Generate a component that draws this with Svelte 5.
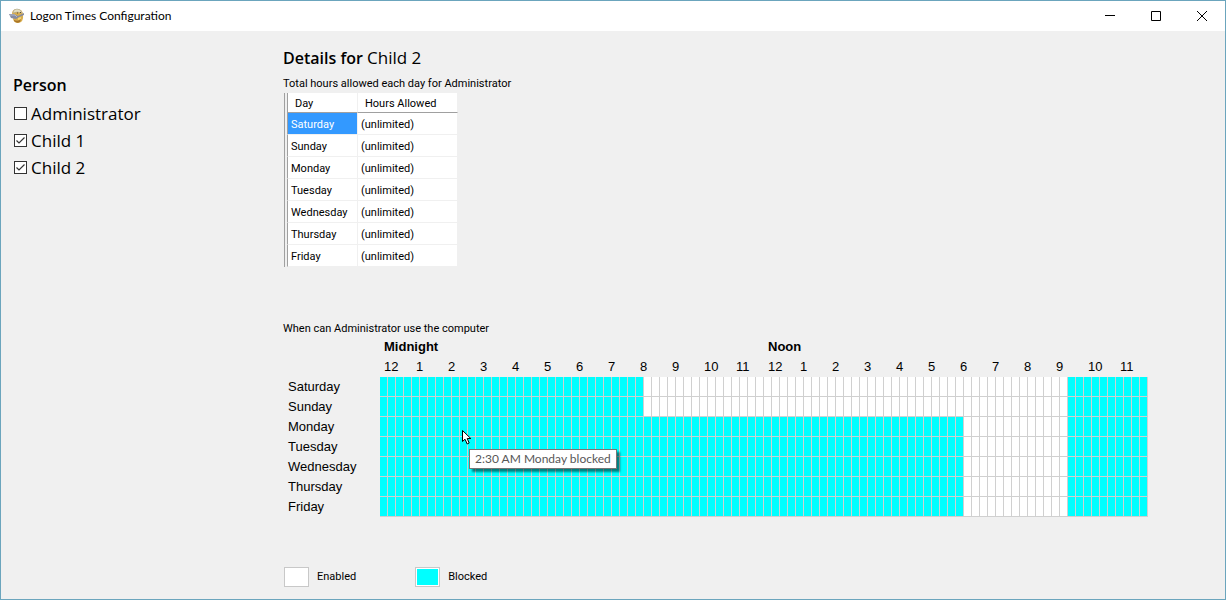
<script>
  const days = ['Saturday', 'Sunday', 'Monday', 'Tuesday', 'Wednesday', 'Thursday', 'Friday'];
  const hours = Array.from({ length: 24 }, (_, i) => i % 12 || 12);

  let people = $state([
    { name: 'Administrator', limited: false },
    { name: 'Child 1', limited: true },
    { name: 'Child 2', limited: true }
  ]);

  // Quarter-hour slots, true when logon is blocked
  let schedule = $state(
    days.map((_, d) => Array.from({ length: 96 }, (_, q) => q < (d < 2 ? 33 : 73) || q >= 86))
  );

  function slotName(d, q) {
    const h = Math.floor(q / 4);
    const minutes = String((q % 4) * 15).padStart(2, '0');
    return `${h % 12 || 12}:${minutes} ${h < 12 ? 'AM' : 'PM'} ${days[d]} ${schedule[d][q] ? 'blocked' : 'enabled'}`;
  }
</script>

<div class="window">
  <header>
    <svg class="logo" width="16" height="16" viewBox="0 0 16 16" aria-hidden="true">
      <path d="M3 6 Q3 1 8 1 Q14 1 14 7 Q15 14 9 15 Q5 15 4 11Z" fill="#d9ae4e" />
      <path d="M4 5 Q4 1 8 1 Q12 1 13 5 Q8 3 4 5Z" fill="#e6dfc0" stroke="#aaa490" stroke-width=".6" />
      <path d="M0 6 L5 6 L9 8 L15 5 L15 7 L10 9 L7 11 L2 10Z" fill="#858ba0" />
      <path d="M1 7 L6 7 L8 9" stroke="#b5bacb" fill="none" />
      <path d="M5 12 Q9 14 12 11 L11 14 Q8 16 5 13Z" fill="#a97528" />
      <path d="M9 10 L12 9 L12 11 L9 12Z" fill="#f1d477" />
      <path d="M8 5 L9 5 M11 4 L12 5" stroke="#5d4d35" />
    </svg>
    <span class="title">Logon Times Configuration</span>
    <button class="caption" aria-label="Minimize">
      <svg width="10" height="10" viewBox="0 0 10 10"><path d="M0 4.5H10" /></svg>
    </button>
    <button class="caption" aria-label="Maximize">
      <svg width="10" height="10" viewBox="0 0 10 10"><path d="M.5 .5H9.5V9.5H.5Z" /></svg>
    </button>
    <button class="caption" aria-label="Close">
      <svg width="10" height="10" viewBox="0 0 10 10"><path d="M0 0L10 10M10 0L0 10" /></svg>
    </button>
  </header>

  <main>
    <aside>
      <h2>Person</h2>
      {#each people as person}
        <label class="person">
          <input type="checkbox" bind:checked={person.limited} />
          <span>{person.name}</span>
        </label>
      {/each}
    </aside>

    <section>
      <h1>Details for <span>Child 2</span></h1>
      <p class="note">Total hours allowed each day for Administrator</p>
      <table class="allowance">
        <thead>
          <tr><th scope="col">Day</th><th scope="col">Hours Allowed</th></tr>
        </thead>
        <tbody>
          {#each days as day, d}
            <tr><td class:selected={d === 0}>{day}</td><td>(unlimited)</td></tr>
          {/each}
        </tbody>
      </table>

      <p class="note when">When can Administrator use the computer</p>
      <table class="schedule">
        <thead>
          <tr class="halves">
            <td></td>
            <th colspan="48" scope="colgroup">Midnight</th>
            <th colspan="48" scope="colgroup">Noon</th>
          </tr>
          <tr class="hours">
            <td></td>
            {#each hours as hour}<th colspan="4" scope="colgroup">{hour}</th>{/each}
          </tr>
        </thead>
        <tbody>
          {#each days as day, d}
            <tr>
              <th scope="row">{day}</th>
              {#each schedule[d] as blocked, q}
                <td class:hovered={d === 2 && q === 10}>
                  <button
                    class="slot"
                    class:blocked
                    aria-label={slotName(d, q)}
                    onclick={() => (schedule[d][q] = !schedule[d][q])}
                  ></button>
                  {#if d === 2 && q === 10}
                    <svg class="pointer" width="12" height="17" viewBox="0 0 12 17" aria-hidden="true">
                      <path d="M.5 .5V11.5L3 9.2L5.2 14L7.2 13L5.2 8.5H8.8Z" fill="#fff" stroke="#000" />
                    </svg>
                    <span class="tip" role="tooltip">{slotName(d, q)}</span>
                  {/if}
                </td>
              {/each}
            </tr>
          {/each}
        </tbody>
      </table>

      <div class="legend">
        <span class="key"><i></i>Enabled</span>
        <span class="key"><i class="on"></i>Blocked</span>
      </div>
    </section>
  </main>
</div>

<style>
  :global(body) { margin: 0; background: #f0f0f0; }
  .window {
    box-sizing: border-box;
    min-height: 100vh;
    border: 1px solid #6ba5bd;
    background: #f0f0f0;
    color: #000;
    font: 11px/16px Roboto, "Liberation Sans", sans-serif;
    display: flex;
    flex-direction: column;
  }
  header { display: flex; align-items: center; height: 30px; padding-left: 8px; background: #fff; }
  .title { flex: 1; margin-left: 5px; font: 12px/16px Lato, sans-serif; }
  .caption { width: 46px; height: 30px; padding: 0; border: 0; background: none; display: grid; place-items: center; }
  .caption svg { fill: none; stroke: #000; stroke-width: 1; }
  main { display: flex; flex: 1; }
  aside { flex: none; width: 270px; padding: 42px 0 0 12px; box-sizing: border-box; }
  h1, h2 { margin: 0; font: 600 16px/24px "Open Sans", sans-serif; }
  h1 span, .person { font: 17px/27px "Open Sans", sans-serif; }
  h1 span { line-height: 24px; }
  h2 { margin-bottom: 3px; }
  .person { display: flex; align-items: center; gap: 4px; padding-left: 1px; }
  input {
    appearance: none; width: 13px; height: 13px; margin: 0; border: 1px solid #333; background: #fff;
  }
  input:checked {
    background: #fff url("data:image/svg+xml,%3Csvg xmlns='http://www.w3.org/2000/svg' viewBox='0 0 11 11'%3E%3Cpath d='M1.5 5.5L4 8L9.5 2.5' fill='none' stroke='%23333' stroke-width='1.2'/%3E%3C/svg%3E");
  }
  section { padding: 15px 0 12px 12px; }
  .note { margin: 6px 0 1px; }
  table { border-collapse: separate; border-spacing: 0; }
  th { font-weight: normal; text-align: left; }
  th, td { padding: 0; }
  .allowance { margin-left: 1px; border-left: 1px solid #a0a0a0; padding-left: 2px; }
  .allowance th, .allowance td { box-sizing: border-box; height: 22px; background: #fff; border-right: 1px solid #f0f0f0; border-bottom: 1px solid #f0f0f0; padding: 2px 0 0 3px; }
  .allowance th { height: 20px; padding-left: 7px; border-bottom-color: #a0a0a0; }
  .allowance tr > :first-child { width: 71px; border-left: 1px solid #a0a0a0; }
  .allowance tr > :last-child { width: 100px; }
  .allowance .selected { background: #39f; color: #fff; }
  .when { margin: 54px 0 0; }
  .schedule { table-layout: fixed; width: 865px; font: 13px/16px "Liberation Sans", Arial, sans-serif; }
  .schedule tr > :first-child { width: 97px; padding-left: 5px; box-sizing: border-box; }
  .halves { height: 20px; }
  .halves th { font-weight: bold; padding-left: 4px; }
  .hours { height: 20px; }
  .hours th { padding-left: 4px; }
  .schedule tbody tr { height: 20px; }
  .slot { display: block; width: 100%; height: 20px; padding: 0; border: solid #d0d0d0; border-width: 0 1px 1px 0; background: #fff; }
  .slot.blocked { background: #0ff; }
  .hovered { position: relative; }
  .pointer { position: absolute; left: 2px; top: 13px; z-index: 2; }
  .tip {
    position: absolute; left: 9px; top: 32px; z-index: 1; box-sizing: border-box; height: 20px; padding: 0 5px;
    white-space: nowrap; border: 1px solid #767676; background: #fff; color: #575757;
    font: 12px/18px Lato, sans-serif; box-shadow: 3px 3px 2px rgb(0 0 0 / 50%);
  }
  .legend { display: flex; gap: 59px; margin: 50px 0 0 1px; }
  .key { display: flex; align-items: center; gap: 8px; }
  .key i { box-sizing: border-box; width: 25px; height: 20px; border: 1px solid #c8c8c8; background: #fff; }
  .key .on { background: #0ff; box-shadow: inset 0 0 0 1px #fff; }
</style>
